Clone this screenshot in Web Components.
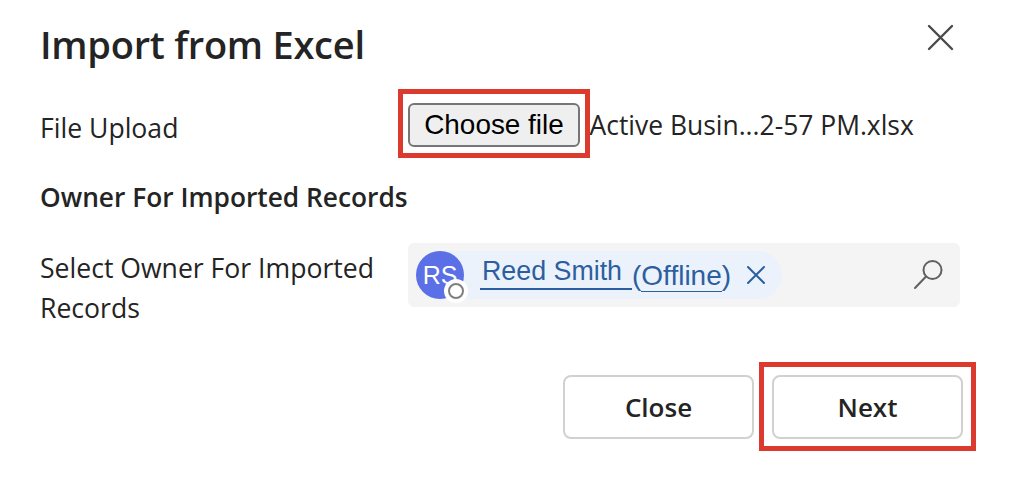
<!DOCTYPE html>
<html>
<head>
<meta charset="utf-8">
<title>Import from Excel</title>
<style>
  html, body { margin: 0; background: #fff; }
  body { font-family: "Open Sans", "Noto Sans", sans-serif; color: #242424; }
</style>
</head>
<body>
<import-dialog>
  <span slot="title">Import from Excel</span>
  <form-row slot="upload" label="File Upload">
    <file-picker filename="Active Busin...2-57 PM.xlsx"></file-picker>
  </form-row>
  <span slot="section">Owner For Imported Records</span>
  <form-row slot="owner" label="Select Owner For Imported Records">
    <lookup-field>
      <person-tag initials="RS" name="Reed Smith" status="Offline"></person-tag>
    </lookup-field>
  </form-row>
  <dialog-button slot="actions">Close</dialog-button>
  <dialog-button slot="actions" marked>Next</dialog-button>
</import-dialog>

<script>
class ImportDialog extends HTMLElement {
  constructor() {
    super();
    this.attachShadow({ mode: "open" });
    this.shadowRoot.innerHTML = `
      <style>
        :host { display: block; width: 1014px; height: 477px; box-sizing: border-box; padding: 20px 54px 0 40px; overflow: hidden; }
        header { display: flex; justify-content: space-between; align-items: flex-start; height: 83px; }
        h1 { margin: 0; font-size: 38px; line-height: 48px; font-weight: 600; letter-spacing: -0.25px; }
        svg { display: block; margin: 3px 4px 0 0; }
        .section { font-size: 26.3px; font-weight: 600; line-height: 34px; margin: 32px 0 29px; }
        footer { display: flex; justify-content: flex-end; gap: 18px; margin: 47px -3px 0 0; }
      </style>
      <header>
        <h1><slot name="title"></slot></h1>
        <svg width="30" height="30" viewBox="0 0 30 30" fill="none" stroke="#4a4a4a" stroke-width="2.4" stroke-linecap="round">
          <path d="M3 3 L26 26 M26 3 L3 26"/>
        </svg>
      </header>
      <slot name="upload"></slot>
      <div class="section"><slot name="section"></slot></div>
      <slot name="owner"></slot>
      <footer><slot name="actions"></slot></footer>
    `;
  }
}

class FormRow extends HTMLElement {
  constructor() {
    super();
    this.attachShadow({ mode: "open" });
    this.shadowRoot.innerHTML = `
      <style>
        :host { display: grid; grid-template-columns: 368px 1fr; align-items: start; }
        .label { font-size: 26.6px; line-height: 40px; padding-top: 5px; max-width: 345px; }
      </style>
      <div class="label"></div>
      <div><slot></slot></div>
    `;
  }

  connectedCallback() {
    this.shadowRoot.querySelector(".label").textContent = this.getAttribute("label");
  }
}

class FilePicker extends HTMLElement {
  constructor() {
    super();
    this.attachShadow({ mode: "open" });
    this.shadowRoot.innerHTML = `
      <style>
        :host { display: flex; align-items: center; gap: 9.5px; height: 44px; }
        .wrap { position: relative; }
        .wrap::after { content: ""; position: absolute; left: -10px; top: -14px; width: 192px; height: 69px; box-sizing: border-box; border: 5px solid #dc3a2f; }
        button { display: block; width: 172px; height: 44px; box-sizing: border-box; padding: 0; background: #efefef; border: 2px solid #767676; border-radius: 6px; font: 27.9px "Liberation Sans", Arial, sans-serif; color: #000; }
        span { font-size: 26.45px; color: #242424; white-space: nowrap; }
      </style>
      <div class="wrap"><button type="button">Choose file</button></div>
      <span></span>
    `;
  }

  connectedCallback() {
    this.shadowRoot.querySelector("span").textContent = this.getAttribute("filename");
  }
}

class LookupField extends HTMLElement {
  constructor() {
    super();
    this.attachShadow({ mode: "open" });
    this.shadowRoot.innerHTML = `
      <style>
        :host { display: flex; align-items: center; justify-content: space-between; height: 64px; box-sizing: border-box; padding: 8px 15px 8px 8px; background: #f4f4f4; border-radius: 6px; }
        svg { display: block; }
      </style>
      <slot></slot>
      <svg width="32" height="32" viewBox="0 0 32 32" fill="none" stroke="#606060" stroke-width="2" stroke-linecap="round">
        <circle cx="19.5" cy="11" r="9"/>
        <path d="M13 17.5 L2 29"/>
      </svg>
    `;
  }
}

class PersonTag extends HTMLElement {
  constructor() {
    super();
    this.attachShadow({ mode: "open" });
    this.shadowRoot.innerHTML = `
      <style>
        :host { display: inline-flex; align-items: center; height: 48px; width: 366px; box-sizing: border-box; background: #ebf2fb; border-radius: 24px; font-family: "Liberation Sans", Arial, sans-serif; color: #2b5f9f; }
        .avatar { position: relative; flex: none; width: 48px; height: 48px; border-radius: 50%; background: #5b6fe6; color: #fff; font-size: 25px; line-height: 48px; text-align: center; }
        .presence { position: absolute; right: -4px; bottom: -4px; width: 24px; height: 24px; box-sizing: border-box; border-radius: 50%; background: #fff; display: flex; align-items: center; justify-content: center; }
        .presence i { display: block; width: 16px; height: 16px; box-sizing: border-box; border-radius: 50%; border: 2.5px solid #7f7f7f; }
        .link { display: flex; align-items: flex-end; margin: 0 0 6px 16px; white-space: nowrap; }
        .name { font-size: 26.8px; line-height: 34px; padding: 0 10px 0 2px; border-bottom: 2px solid #2b5f9f; }
        .status { font-size: 28px; line-height: 32px; position: relative; top: 2px; }
        u { text-decoration: none; border-bottom: 1.5px solid #2b5f9f; }
        svg { display: block; margin-left: 15px; }
      </style>
      <div class="avatar"><span class="initials"></span><div class="presence"><i></i></div></div>
      <div class="link"><span class="name"></span><span class="status">(<u></u>)</span></div>
      <svg width="20" height="20" viewBox="0 0 20 20" fill="none" stroke="#2b5f9f" stroke-width="2" stroke-linecap="round">
        <path d="M2 2 L18 18 M18 2 L2 18"/>
      </svg>
    `;
  }

  connectedCallback() {
    const root = this.shadowRoot;
    root.querySelector(".initials").textContent = this.getAttribute("initials");
    root.querySelector(".name").textContent = this.getAttribute("name");
    root.querySelector("u").textContent = this.getAttribute("status");
  }
}

class DialogButton extends HTMLElement {
  constructor() {
    super();
    this.attachShadow({ mode: "open" });
    this.shadowRoot.innerHTML = `
      <style>
        :host { display: block; position: relative; }
        button { display: block; width: 191px; height: 64px; box-sizing: border-box; background: #fff; border: 2px solid #d1d1d1; border-radius: 8px; font: 600 26px "Open Sans", "Noto Sans", sans-serif; color: #242424; padding: 0; }
        :host([marked])::after { content: ""; position: absolute; left: -13px; top: -13px; width: 217px; height: 89px; box-sizing: border-box; border: 5px solid #dc3a2f; }
      </style>
      <button type="button"><slot></slot></button>
    `;
  }
}

customElements.define("import-dialog", ImportDialog);
customElements.define("form-row", FormRow);
customElements.define("file-picker", FilePicker);
customElements.define("lookup-field", LookupField);
customElements.define("person-tag", PersonTag);
customElements.define("dialog-button", DialogButton);
</script>
</body>
</html>
